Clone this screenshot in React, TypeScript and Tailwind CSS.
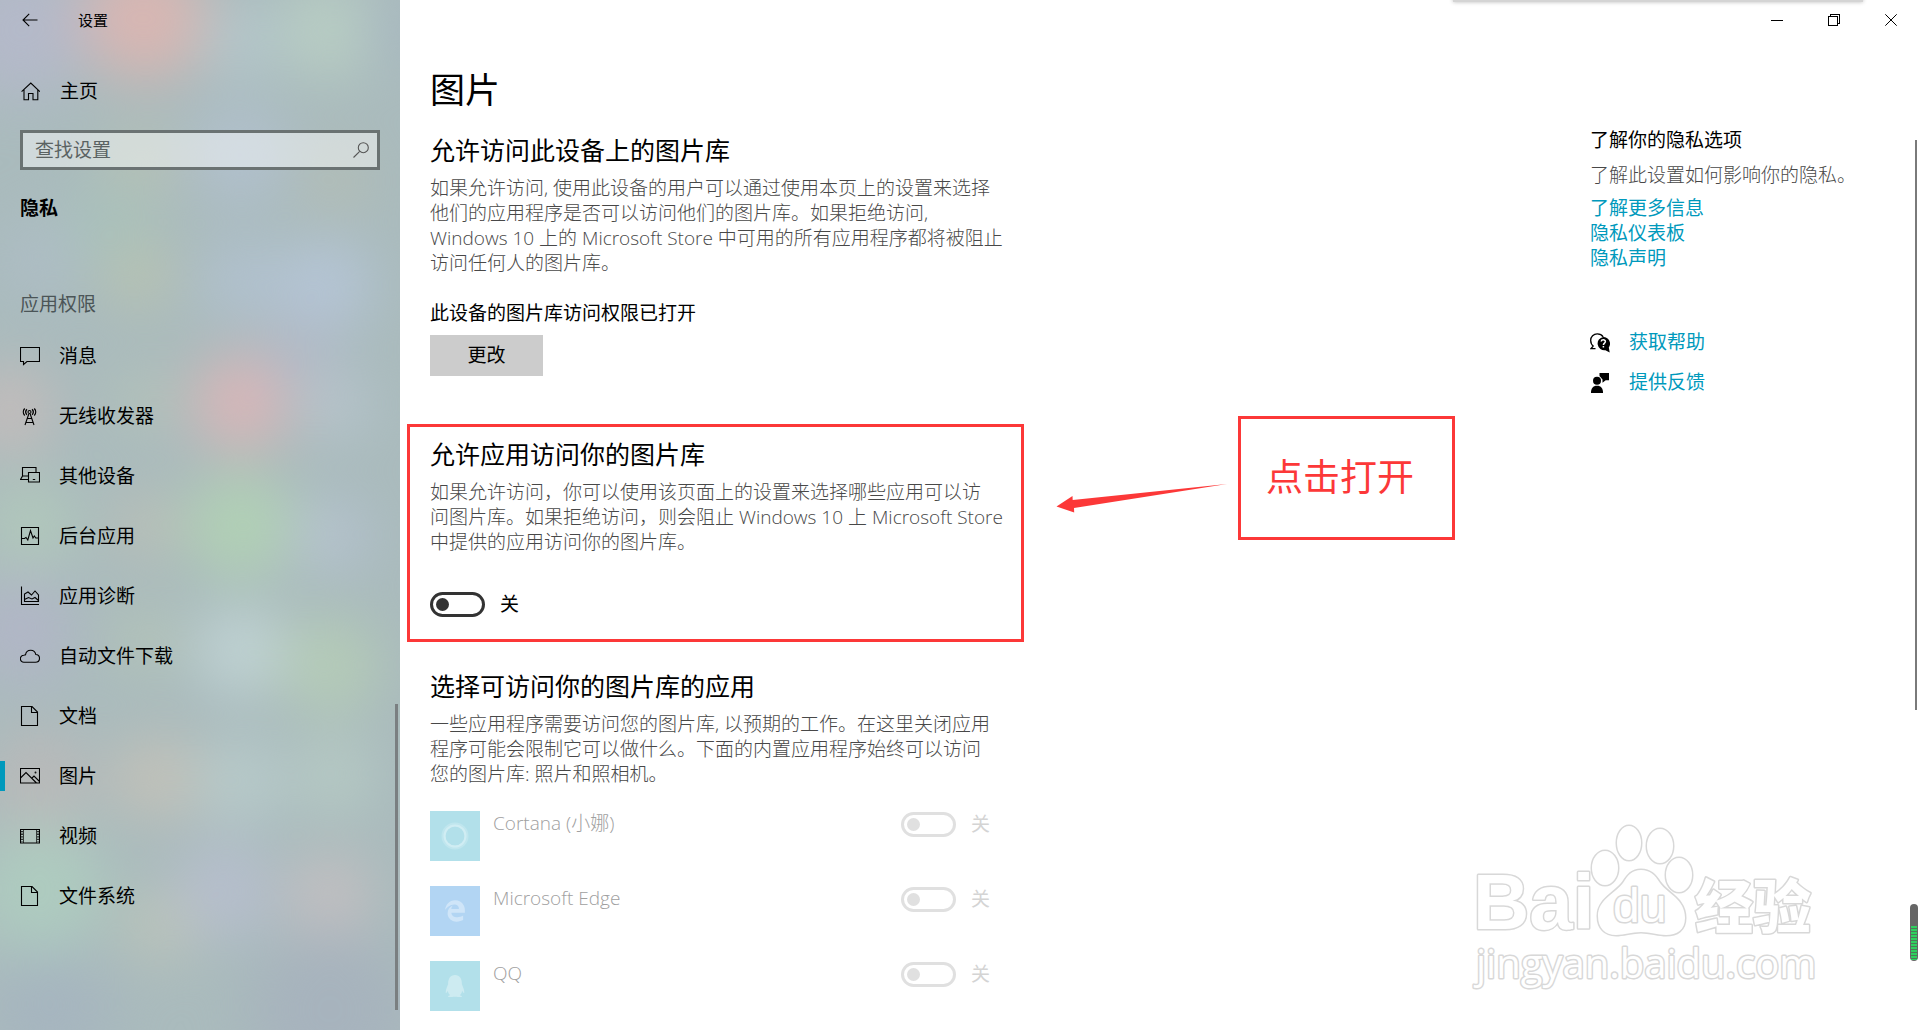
import type { ReactNode } from 'react';
import clsx from 'clsx';
import { FaEdgeLegacy, FaQq } from 'react-icons/fa';

interface NavItem {
  label: string;
  icon: ReactNode;
  active?: boolean;
}

interface AppEntry {
  name: string;
  tile: string;
  glyph: ReactNode;
}

function Icon({ children }: { children: ReactNode }) {
  return (
    <svg viewBox="0 0 20 20" className="size-5 shrink-0" fill="none" stroke="currentColor" strokeWidth="1.1" aria-hidden="true">
      {children}
    </svg>
  );
}

const documentIcon = (
  <Icon>
    <path d="M1.500.5h10.500l5.500 5.500v13.500h-16z M11.500.5v6h6" />
  </Icon>
);

const navItems: NavItem[] = [
  { label: '消息', icon: <Icon><path d="M.5 1.500h19v14H7L3.500 18.500v-3H.5z" /></Icon> },
  {
    label: '无线收发器',
    icon: (
      <Icon>
        <path d="M8.800 8 5 19 M10.200 8 14 19 M7.300 12.500h4.400 M6 16.500h7" />
        <circle cx="9.500" cy="6" r="1.500" />
        <path d="M6.900 8.700a4 4 0 0 1 0-5.400 M12.100 8.700a4 4 0 0 0 0-5.400 M4.700 9.500c-1.800-2-1.800-5 0-7 M14.300 9.500c1.800-2 1.800-5 0-7" strokeWidth="1.300" />
      </Icon>
    ),
  },
  {
    label: '其他设备',
    icon: (
      <Icon>
        <path d="M8 13.500H.5l2-3.500V1.500h13.500V6 M2.500 10H8" />
        <path d="M8.500 6.500h11v9.500h-11z M12.800 13.500h2.400" />
      </Icon>
    ),
  },
  {
    label: '后台应用',
    icon: (
      <Icon>
        <path d="M1.500 1.500h17v17h-17z M1.500 12.500h3l1.500-1 1.800 2.500L10.500 4.500l2.500 7.500 1.300-2 1.500 2h2.700" />
      </Icon>
    ),
  },
  {
    label: '应用诊断',
    icon: (
      <Icon>
        <path d="M1.500.5v18h17.500 M4.500 15.500V8l3.500-2 3.500 3 3.500-4 3.500 4v6.500z M4.500 13.500l4-2 3.500 1.500 3-1.500 3.500 3" />
      </Icon>
    ),
  },
  {
    label: '自动文件下载',
    icon: (
      <Icon>
        <path d="M4 16.200a3.500 3.500 0 0 1-.300-7C4.500 9 5 9 5.500 8.800 6 5.800 8 4.200 10.700 4.200c2.600 0 4.600 1.600 5.100 4.300 2.300.1 3.700 1.700 3.700 3.800 0 2.200-1.700 3.900-4 3.900z" />
      </Icon>
    ),
  },
  { label: '文档', icon: documentIcon },
  {
    label: '图片',
    active: true,
    icon: (
      <Icon>
        <path d="M.5 2.500h19v14.500H.5z M.5 12l5.500-5.500 10.500 10.500 M11.500 12.500l2.500-2.500 5.500 5.500" />
        <circle cx="15.500" cy="6.500" r=".4" />
      </Icon>
    ),
  },
  {
    label: '视频',
    icon: (
      <Icon>
        <path d="M.5 3.500h19v13.500H.5z" />
        <path d="M3.500 3.500v13.500 M16.500 3.500v13.500" strokeWidth=".7" />
        <path d="M2 5v11 M18 5v11" strokeDasharray="1.300 1.300" strokeWidth="1.500" />
      </Icon>
    ),
  },
  { label: '文件系统', icon: documentIcon },
];

const apps: AppEntry[] = [
  {
    name: 'Cortana (小娜)',
    tile: 'bg-[#b2e0ea]',
    glyph: (
      <svg viewBox="0 0 28 28" className="size-7" fill="none" aria-hidden="true">
        <circle cx="14" cy="14" r="11.500" stroke="#c0e6ee" strokeWidth="4" />
        <circle cx="14" cy="14" r="10.500" stroke="#d0edf3" strokeWidth="2" />
      </svg>
    ),
  },
  { name: 'Microsoft Edge', tile: 'bg-[#b2d5f3]', glyph: <FaEdgeLegacy className="size-[22px] text-[#cfe5f8]" /> },
  { name: 'QQ', tile: 'bg-[#b2e0ea]', glyph: <FaQq className="size-[22px] text-[#cdebf1]" /> },
];

// Soft colour spots seen through the acrylic sidebar: x, y, radius, fill
const spots: [number, number, number, string][] = [
  [20, 30, 70, '#b4b9c9'],
  [145, 18, 62, '#d8b6b2'],
  [240, 40, 40, '#b3c6cb'],
  [330, 30, 50, '#b8cdc3'],
  [395, 30, 30, '#a5b5c0'],
  [140, 165, 36, '#b7c1b4'],
  [240, 155, 48, '#b1c0cd'],
  [335, 180, 30, '#b6beb4'],
  [110, 230, 50, '#a8c0bb'],
  [140, 275, 34, '#b9c3b1'],
  [40, 260, 40, '#aebdc5'],
  [240, 280, 40, '#b1c1cf'],
  [325, 285, 46, '#b5c5d6'],
  [241, 402, 48, '#d8b6b8'],
  [10, 410, 44, '#c4bcbb'],
  [145, 400, 30, '#b6c3b8'],
  [300, 350, 36, '#b0b9c6'],
  [335, 405, 34, '#b8c5cd'],
  [240, 525, 54, '#b1d0b5'],
  [330, 535, 36, '#b6c3d0'],
  [145, 525, 32, '#bcc0b6'],
  [30, 525, 46, '#b1c8bb'],
  [20, 630, 54, '#b1b6c6'],
  [145, 640, 34, '#b4c4b8'],
  [240, 650, 44, '#c0d3d4'],
  [330, 665, 50, '#b4cbb7'],
  [40, 780, 52, '#b9b9b9'],
  [155, 778, 42, '#c3c1b8'],
  [240, 780, 44, '#b7caca'],
  [335, 775, 40, '#b6cac4'],
  [40, 890, 66, '#aecbbf'],
  [160, 925, 36, '#bcc4b9'],
  [225, 890, 48, '#b6becd'],
  [330, 895, 42, '#c3bfc1'],
  [50, 1010, 60, '#a6b5bf'],
  [330, 1010, 80, '#a7b3bd'],
];

function Backdrop() {
  return (
    <svg viewBox="0 0 400 1030" preserveAspectRatio="none" className="absolute inset-0 -z-10 size-full" aria-hidden="true">
      <filter id="soften" x="-20%" y="-20%" width="140%" height="140%" colorInterpolationFilters="sRGB">
        <feGaussianBlur stdDeviation="28" />
      </filter>
      <rect width="400" height="1030" fill="#aabbbd" />
      <g filter="url(#soften)">
        {spots.map(([cx, cy, r, fill]) => (
          <circle key={`${cx}-${cy}`} cx={cx} cy={cy} r={r} fill={fill} />
        ))}
      </g>
    </svg>
  );
}

function Sidebar() {
  return (
    <aside className="relative isolate flex w-[400px] shrink-0 flex-col overflow-hidden">
      <Backdrop />
      <div className="flex h-10 items-center">
        <button type="button" aria-label="返回" className="flex h-10 w-[60px] items-center justify-center">
          <svg viewBox="0 0 16 14" className="h-[14px] w-4" fill="none" stroke="currentColor" strokeWidth="1.100" aria-hidden="true">
            <path d="M7.200.8 1 7l6.200 6.200 M1 7h14.500" />
          </svg>
        </button>
        <span className="ml-[18px] text-[15px] leading-5">设置</span>
      </div>

      <a href="#home" className="mt-7 flex h-[46px] items-center gap-5 pl-5">
        <Icon>
          <path d="M1.600 10.600 10.800 2l9 8.600 M4 8.800v10h4.500v-6.300h4.500v6.300h4.800v-10" />
        </Icon>
        主页
      </a>

      <div className="mx-5 mt-4 flex h-10 items-center border-3 border-[#6a7272] bg-white/45 pr-2 pl-3">
        <input
          type="search"
          aria-label="查找设置"
          placeholder="查找设置"
          className="min-w-0 flex-1 bg-transparent outline-none placeholder:text-[#5a6262]"
        />
        <svg viewBox="0 0 16 16" className="size-4" fill="none" stroke="#555" strokeWidth="1.100" aria-hidden="true">
          <circle cx="10.300" cy="5.700" r="5" />
          <path d="M6.700 9.300.500 15.500" />
        </svg>
      </div>

      <h2 className="mt-[26px] pl-5 font-bold">隐私</h2>
      <h3 className="mt-[71px] pl-5 text-[#4b5557]">应用权限</h3>

      <nav className="mt-[9px]">
        {navItems.map((item) => (
          <a
            key={item.label}
            href="#nav"
            aria-current={item.active ? 'page' : undefined}
            className="flex h-[60px] items-center"
          >
            <span className={clsx('h-[30px] w-[5px]', item.active && 'bg-[#0099bc]')} />
            <span className="flex items-center gap-[19px] pl-[15px]">
              {item.icon}
              {item.label}
            </span>
          </a>
        ))}
      </nav>
      <div className="absolute right-[2px] bottom-5 h-[306px] w-[3px] bg-[#7a7f81]" />
    </aside>
  );
}

function TitleButtons() {
  return (
    <div className="flex h-10 justify-end pr-px">
      <button type="button" aria-label="最小化" className="flex w-[57px] items-center justify-center">
        <span className="h-px w-3 bg-black" />
      </button>
      <button type="button" aria-label="还原" className="flex w-[57px] items-center justify-center">
        <svg viewBox="0 0 12 12" className="size-3" fill="none" stroke="black" shapeRendering="crispEdges" aria-hidden="true">
          <path d="M.5 2.500h9v9h-9z M2.500 2.500v-2h9v9h-2" />
        </svg>
      </button>
      <button type="button" aria-label="关闭" className="flex w-[57px] items-center justify-center">
        <svg viewBox="0 0 12 12" className="size-3" fill="none" stroke="black" aria-hidden="true">
          <path d="M.300.300l11.400 11.400 M11.700.300.300 11.700" />
        </svg>
      </button>
    </div>
  );
}

function Toggle({ label, disabled }: { label: string; disabled?: boolean }) {
  return (
    <label className={clsx('flex h-[25px] items-center gap-[15px]', disabled ? 'text-[#d4d4d4]' : 'text-black')}>
      <input
        type="checkbox"
        role="switch"
        aria-label={label}
        disabled={disabled}
        className="flex h-[25px] w-[55px] appearance-none items-center rounded-full border-3 border-[#333] pl-[3px] before:size-[13px] before:rounded-full before:bg-[#333] disabled:border-[#e0e0e0] disabled:before:bg-[#e0e0e0]"
      />
      关
    </label>
  );
}

function Heading({ children }: { children: ReactNode }) {
  return <h2 className="text-[25px] leading-[30px]">{children}</h2>;
}

function Paragraph({ lines }: { lines: string[] }) {
  return (
    <p className="mt-[11px] font-light text-[#484848]">
      {lines.map((line) => (
        <span key={line} className="block whitespace-nowrap">
          {line}
        </span>
      ))}
    </p>
  );
}

// Red frame, arrow and note laid over the access section
function Annotation() {
  return (
    <>
      <div className="pointer-events-none absolute -top-[15px] -left-[23px] h-[218px] w-[617px] border-3 border-[#fc3838]" />
      <svg viewBox="0 0 172 30" className="absolute top-[44px] left-[626px] h-[30px] w-[172px]" fill="#fc3838" aria-hidden="true">
        <path d="M.5 23.500 16.500 13l.2 4L171 1 18 25l.200 4.500z" />
      </svg>
      <div className="absolute -top-[23px] left-[808px] flex h-[124px] w-[217px] border-3 border-[#fc3838] pt-[32px] pl-[25px] text-[37px] leading-[52px] whitespace-nowrap text-[#fc3838]">
        点击打开
      </div>
    </>
  );
}

function HelpPanel() {
  return (
    <aside className="w-[330px] shrink-0 pt-[88px]">
      <h2>了解你的隐私选项</h2>
      <p className="mt-[10px] font-light text-[#484848]">了解此设置如何影响你的隐私。</p>
      <div className="mt-2 flex flex-col items-start text-[#0099bc]">
        <a href="#more">了解更多信息</a>
        <a href="#dashboard">隐私仪表板</a>
        <a href="#statement">隐私声明</a>
      </div>
      <a href="#help" className="mt-[59px] flex items-center gap-[19px] text-[#0099bc]">
        <svg viewBox="0 0 20 20" className="size-5 text-black" aria-hidden="true">
          <path d="M3.500 13.300C1.500 11.800.700 9.800.700 7.500A6.500 6.500 0 0 1 7.300.800c2.700 0 4.700 1.200 5.900 3M3.300 13 1 15.700h4.500" fill="none" stroke="currentColor" strokeWidth="1.300" />
          <path d="M13.300 3.900a6.700 6.700 0 0 1 5.500 10.500l.9 5.100-4.300-2.300A6.700 6.700 0 1 1 13.300 3.900z" fill="currentColor" />
          <path d="M11.200 8.500c.200-2.300 4.300-2.200 4.200.1 0 1.500-2 1.600-2 3.400M13.400 13v1.600" fill="none" stroke="white" strokeWidth="1.500" />
        </svg>
        获取帮助
      </a>
      <a href="#feedback" className="mt-[15px] flex items-center gap-[19px] text-[#0099bc]">
        <svg viewBox="0 0 20 20" className="size-5 text-black" fill="currentColor" aria-hidden="true">
          <circle cx="7" cy="7.700" r="4" />
          <path d="M1 20c-.200-4.700 2-7.300 6-7.300s6.200 2.600 6 7.300z" />
          <path d="M9.500 0H19v7.300h-3.300L12.500 9.800V6.500L9.500 3z" />
        </svg>
        提供反馈
      </a>
    </aside>
  );
}

function Watermark() {
  return (
    <svg
      viewBox="0 0 350 176"
      className="pointer-events-none absolute right-[100px] bottom-[36px] h-[176px] w-[350px] overflow-visible"
      fill="white"
      stroke="#d8d8d8"
      strokeWidth="3"
      strokeLinejoin="round"
      paintOrder="stroke"
      aria-hidden="true"
    >
      <text x="3" y="111" fontSize="78" className="font-['Liberation_Sans'] font-bold">Bai</text>
      <ellipse cx="135" cy="50" rx="13" ry="17" />
      <ellipse cx="159" cy="25" rx="12" ry="17" />
      <ellipse cx="190" cy="28" rx="13" ry="17" />
      <ellipse cx="209" cy="57" rx="13" ry="17" />
      <path d="M171 52c9 0 14 5 19 13 8 11 25 16 25 35 0 12-8 17-19 17-9 0-15-3-25-3s-16 3-25 3c-11 0-18-7-18-19 0-16 15-21 25-33 5-8 9-13 18-13z" />
      <text x="143" y="104" fontSize="48" className="font-['Liberation_Sans'] font-normal">du</text>
      <text x="225" y="110" fontSize="58" className="font-['Noto_Sans_CJK_SC'] font-black">经验</text>
      <text x="6" y="160" fontSize="40" className="font-['Open_Sans'] font-medium">jingyan.baidu.com</text>
    </svg>
  );
}

export default function App() {
  return (
    <div className="relative flex min-h-screen overflow-hidden bg-white font-['Open_Sans','Noto_Sans_CJK_SC',sans-serif] text-[19px] leading-[25px] font-normal text-black">
      <Sidebar />
      <div className="min-w-0 flex-1">
        <TitleButtons />
        <div className="flex pl-[30px]">
          <main className="min-w-0 flex-1">
            <h1 className="mt-[25px] text-[35px] leading-[50px]">图片</h1>

            <section className="mt-5">
              <Heading>允许访问此设备上的图片库</Heading>
              <Paragraph
                lines={[
                  '如果允许访问, 使用此设备的用户可以通过使用本页上的设置来选择',
                  '他们的应用程序是否可以访问他们的图片库。如果拒绝访问,',
                  'Windows 10 上的 Microsoft Store 中可用的所有应用程序都将被阻止',
                  '访问任何人的图片库。',
                ]}
              />
              <p className="mt-[25px]">此设备的图片库访问权限已打开</p>
              <button type="button" className="mt-[9px] h-[41px] w-[113px] bg-[#ccc]">
                更改
              </button>
            </section>

            <section className="relative mt-[63px]">
              <Heading>允许应用访问你的图片库</Heading>
              <Paragraph
                lines={[
                  '如果允许访问，你可以使用该页面上的设置来选择哪些应用可以访',
                  '问图片库。如果拒绝访问，则会阻止 Windows 10 上 Microsoft Store',
                  '中提供的应用访问你的图片库。',
                ]}
              />
              <div className="mt-[37px] flex">
                <Toggle label="允许应用访问你的图片库" />
              </div>
              <Annotation />
            </section>

            <section className="mt-[54px]">
              <Heading>选择可访问你的图片库的应用</Heading>
              <Paragraph
                lines={[
                  '一些应用程序需要访问您的图片库, 以预期的工作。在这里关闭应用',
                  '程序可能会限制它可以做什么。下面的内置应用程序始终可以访问',
                  '您的图片库: 照片和照相机。',
                ]}
              />
              <ul className="mt-6 flex w-[560px] flex-col gap-[25px]">
                {apps.map((app) => (
                  <li key={app.name} className="flex h-[50px] items-start">
                    <span className={clsx('flex size-[50px] items-center justify-center', app.tile)}>{app.glyph}</span>
                    <span className="ml-[13px] font-light text-[#a0a0a0]">{app.name}</span>
                    <span className="ml-auto pt-px">
                      <Toggle label={app.name} disabled />
                    </span>
                  </li>
                ))}
              </ul>
            </section>
          </main>
          <HelpPanel />
        </div>
      </div>

      <div className="absolute -top-1 right-[57px] h-[6px] w-[410px] bg-[#d4d4d4] shadow-[0_0_4px_#bbb]" />
      <div className="absolute top-[140px] right-[3px] h-[570px] w-[2px] bg-[#7a7a7a]" />
      <div className="absolute right-[2px] bottom-[69px] h-[57px] w-2 overflow-hidden rounded-full bg-[#666] pt-[22px]">
        <div className="mx-px h-[34px] bg-[repeating-linear-gradient(#2fd05f_0px_2px,#4c7a58_2px_3px)]" />
      </div>
      <Watermark />
    </div>
  );
}
